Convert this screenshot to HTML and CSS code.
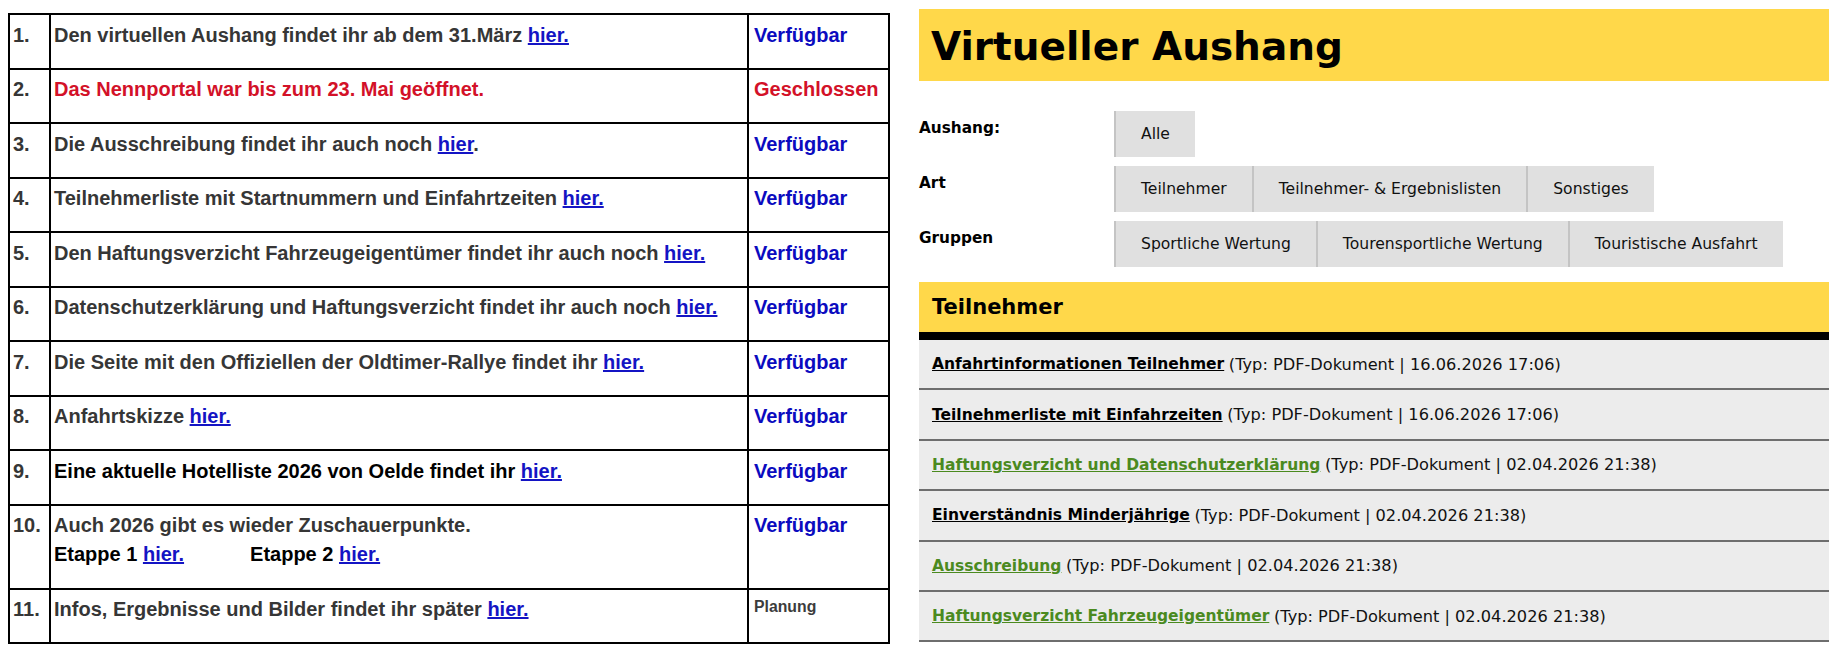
FILE: index.html
```html
<!DOCTYPE html>
<html lang="de">
<head>
<meta charset="utf-8">
<title>Oldtimer-Rallye – Informationen und Virtueller Aushang</title>
<link rel="stylesheet" href="styles.css">
</head>
<body>
<div class="page">
  <table class="status-table">
    <colgroup>
      <col class="col-num">
      <col class="col-text">
      <col class="col-state">
    </colgroup>
    <tr>
      <td class="num">1.</td>
      <td class="text">Den virtuellen Aushang findet ihr ab dem 31.März <a href="#">hier.</a></td>
      <td class="state ok">Verfügbar</td>
    </tr>
    <tr>
      <td class="num">2.</td>
      <td class="text closed">Das Nennportal war bis zum 23. Mai geöffnet.</td>
      <td class="state closed">Geschlossen</td>
    </tr>
    <tr>
      <td class="num">3.</td>
      <td class="text">Die Ausschreibung findet ihr auch noch <a href="#">hier</a>.</td>
      <td class="state ok">Verfügbar</td>
    </tr>
    <tr>
      <td class="num">4.</td>
      <td class="text">Teilnehmerliste mit Startnummern und Einfahrtzeiten <a href="#">hier.</a></td>
      <td class="state ok">Verfügbar</td>
    </tr>
    <tr>
      <td class="num">5.</td>
      <td class="text">Den Haftungsverzicht Fahrzeugeigentümer findet ihr auch noch <a href="#">hier.</a></td>
      <td class="state ok">Verfügbar</td>
    </tr>
    <tr>
      <td class="num">6.</td>
      <td class="text">Datenschutzerklärung und Haftungsverzicht findet ihr auch noch <a href="#">hier.</a></td>
      <td class="state ok">Verfügbar</td>
    </tr>
    <tr>
      <td class="num">7.</td>
      <td class="text">Die Seite mit den Offiziellen der Oldtimer-Rallye findet ihr <a href="#">hier.</a></td>
      <td class="state ok">Verfügbar</td>
    </tr>
    <tr>
      <td class="num">8.</td>
      <td class="text">Anfahrtskizze <a href="#">hier.</a></td>
      <td class="state ok">Verfügbar</td>
    </tr>
    <tr>
      <td class="num">9.</td>
      <td class="text strong">Eine aktuelle Hotelliste 2026 von Oelde findet ihr <a href="#">hier.</a></td>
      <td class="state ok">Verfügbar</td>
    </tr>
    <tr class="tall">
      <td class="num">10.</td>
      <td class="text">Auch 2026 gibt es wieder Zuschauerpunkte.<br>
        <span class="stage">Etappe 1 <a href="#">hier.</a></span><span class="stage">Etappe 2 <a href="#">hier.</a></span></td>
      <td class="state ok">Verfügbar</td>
    </tr>
    <tr>
      <td class="num">11.</td>
      <td class="text">Infos, Ergebnisse und Bilder findet ihr später <a href="#">hier.</a></td>
      <td class="state planned">Planung</td>
    </tr>
  </table>

  <section class="board">
    <header class="board-head">
      <h1>Virtueller Aushang</h1>
    </header>

    <div class="filters">
      <div class="filter-row">
        <span class="filter-label">Aushang:</span>
        <div class="filter-buttons">
          <a class="filter-btn" href="#">Alle</a>
        </div>
      </div>
      <div class="filter-row">
        <span class="filter-label">Art</span>
        <div class="filter-buttons">
          <a class="filter-btn" href="#">Teilnehmer</a>
          <a class="filter-btn" href="#">Teilnehmer- &amp; Ergebnislisten</a>
          <a class="filter-btn" href="#">Sonstiges</a>
        </div>
      </div>
      <div class="filter-row">
        <span class="filter-label">Gruppen</span>
        <div class="filter-buttons">
          <a class="filter-btn" href="#">Sportliche Wertung</a>
          <a class="filter-btn" href="#">Tourensportliche Wertung</a>
          <a class="filter-btn" href="#">Touristische Ausfahrt</a>
        </div>
      </div>
    </div>

    <div class="doc-group">
      <h2 class="doc-group-title">Teilnehmer</h2>
      <ul class="doc-list">
        <li><a class="doc-link" href="#">Anfahrtinformationen Teilnehmer</a> <span class="doc-meta">(Typ: PDF-Dokument | 16.06.2026 17:06)</span></li>
        <li><a class="doc-link" href="#">Teilnehmerliste mit Einfahrzeiten</a> <span class="doc-meta">(Typ: PDF-Dokument | 16.06.2026 17:06)</span></li>
        <li><a class="doc-link visited" href="#">Haftungsverzicht und Datenschutzerklärung</a> <span class="doc-meta">(Typ: PDF-Dokument | 02.04.2026 21:38)</span></li>
        <li><a class="doc-link" href="#">Einverständnis Minderjährige</a> <span class="doc-meta">(Typ: PDF-Dokument | 02.04.2026 21:38)</span></li>
        <li><a class="doc-link visited" href="#">Ausschreibung</a> <span class="doc-meta">(Typ: PDF-Dokument | 02.04.2026 21:38)</span></li>
        <li><a class="doc-link visited" href="#">Haftungsverzicht Fahrzeugeigentümer</a> <span class="doc-meta">(Typ: PDF-Dokument | 02.04.2026 21:38)</span></li>
      </ul>
    </div>
  </section>
</div>
</body>
</html>
```

FILE: styles.css
```css
html, body {
  margin: 0;
  padding: 0;
  background: #ffffff;
}

body {
  width: 1829px;
  height: 649px;
  overflow: hidden;
}

.page {
  display: flex;
  align-items: flex-start;
  gap: 29px;
  padding: 9px 0 0 8px;
}

/* ---------- status table (left) ---------- */

.status-table {
  flex: 0 0 auto;
  width: 882px;
  margin-top: 4px;
  border-collapse: collapse;
  table-layout: fixed;
  border: 2px solid #000;
  font-family: "Liberation Sans", Arial, sans-serif;
  font-weight: bold;
  font-size: 20px;
  color: #363636;
}

.col-num { width: 41px; }
.col-state { width: 141px; }

.status-table tr { height: 54.5px; }
.status-table tr.tall { height: 84px; }

.status-table td {
  border: 2px solid #000;
  vertical-align: top;
  padding: 8.5px 4px 0 3px;
  line-height: normal;
}

.status-table td.num {
  padding-left: 3px;
  padding-right: 0;
}

.status-table td.state {
  padding-left: 5px;
  padding-right: 0;
  white-space: nowrap;
}

.status-table a {
  color: #1414c4;
  text-decoration: underline;
}

.status-table .strong { color: #000; }
.status-table .closed { color: #d31128; }
.status-table .ok { color: #0b0bbf; }

.status-table .planned {
  color: #3c3c3c;
  font-size: 15.8px;
  padding-top: 8px;
}

.stage {
  display: inline-block;
  color: #000;
  margin-top: 6px;
}

.stage + .stage { margin-left: 66px; }

/* ---------- virtual board (right) ---------- */

.board {
  flex: 1 1 auto;
  min-width: 0;
  font-family: "DejaVu Sans", Verdana, sans-serif;
  color: #111;
}

.board-head {
  height: 72px;
  background: #ffd84a;
  display: flex;
  align-items: center;
  padding: 2px 0 0 12px;
  box-sizing: border-box;
}

.board-head h1 {
  margin: 0;
  font-size: 39px;
  font-weight: bold;
  color: #000;
  line-height: 1;
}

.filters {
  display: flex;
  flex-direction: column;
  gap: 9px;
  margin-top: 30px;
}

.filter-row {
  display: flex;
  align-items: flex-start;
}

.filter-label {
  flex: 0 0 195px;
  padding-top: 8px;
  font-size: 15.3px;
  font-weight: bold;
  color: #000;
}

.filter-buttons {
  display: flex;
}

.filter-btn {
  display: flex;
  align-items: center;
  height: 46px;
  padding: 0 25px 0 25px;
  background: #e0e0e0;
  border-left: 2px solid #c4c4c4;
  font-size: 15.6px;
  color: #111;
  text-decoration: none;
  white-space: nowrap;
}

.doc-group {
  margin-top: 15px;
}

.doc-group-title {
  margin: 0;
  height: 50px;
  display: flex;
  align-items: center;
  padding: 0 0 0 13px;
  background: #ffd84a;
  border-bottom: 8px solid #000;
  font-size: 21px;
  font-weight: bold;
  color: #000;
}

.doc-list {
  list-style: none;
  margin: 0;
  padding: 0;
}

.doc-list li {
  display: flex;
  align-items: center;
  gap: 0.3em;
  height: 48.4px;
  padding-left: 13px;
  background: #ececec;
  border-bottom: 2px solid #6e6e6e;
  font-size: 15.5px;
  color: #111;
  white-space: nowrap;
}

.doc-link {
  font-weight: bold;
  color: #000;
  text-decoration: underline;
}

.doc-link.visited { color: #4b8a1f; }

.doc-meta {
  font-size: 16.2px;
}
```
